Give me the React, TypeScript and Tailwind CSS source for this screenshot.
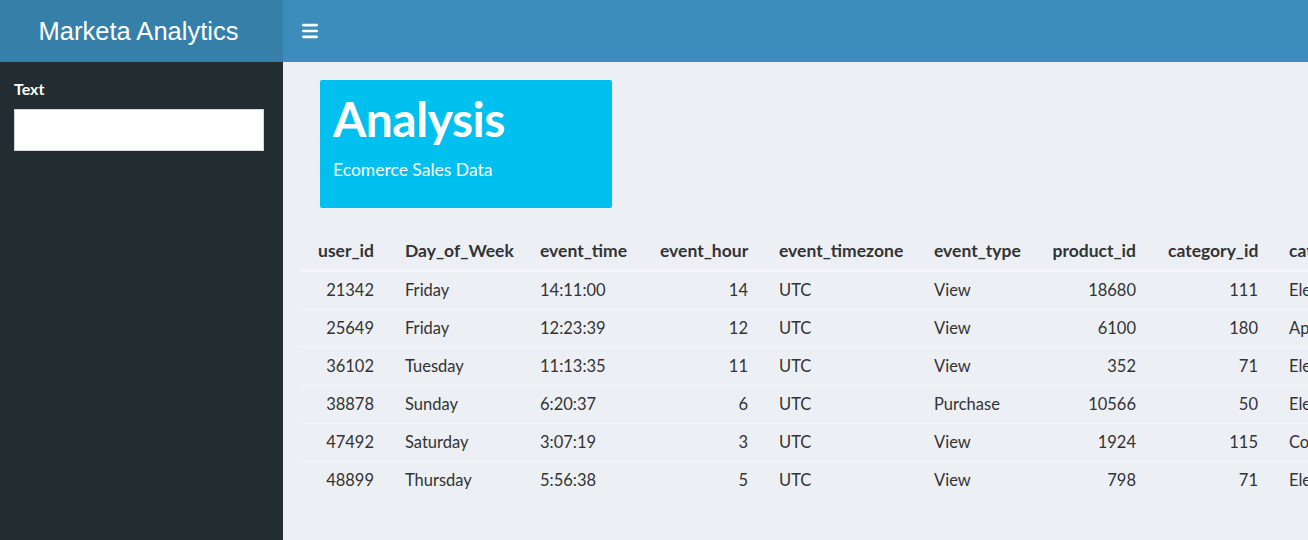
import { Menu } from "lucide-react";

type Row = {
  user_id: number;
  day: string;
  time: string;
  hour: number;
  tz: string;
  type: string;
  product: number;
  category: number;
  catName: string;
};

const rows: Row[] = [
  { user_id: 21342, day: "Friday", time: "14:11:00", hour: 14, tz: "UTC", type: "View", product: 18680, category: 111, catName: "Electronics" },
  { user_id: 25649, day: "Friday", time: "12:23:39", hour: 12, tz: "UTC", type: "View", product: 6100, category: 180, catName: "Apparel" },
  { user_id: 36102, day: "Tuesday", time: "11:13:35", hour: 11, tz: "UTC", type: "View", product: 352, category: 71, catName: "Electronics" },
  { user_id: 38878, day: "Sunday", time: "6:20:37", hour: 6, tz: "UTC", type: "Purchase", product: 10566, category: 50, catName: "Electronics" },
  { user_id: 47492, day: "Saturday", time: "3:07:19", hour: 3, tz: "UTC", type: "View", product: 1924, category: 115, catName: "Computers" },
  { user_id: 48899, day: "Thursday", time: "5:56:38", hour: 5, tz: "UTC", type: "View", product: 798, category: 71, catName: "Electronics" },
];

const font = { fontFamily: "Lato, 'Noto Sans', sans-serif" };

export default function App() {
  return (
    <div className="w-[1308px] h-[540px] flex flex-col overflow-hidden bg-[#ecf0f5]" style={font}>
      {/* Top header */}
      <header className="h-[62px] flex shrink-0">
        <div
          className="w-[283px] bg-[#367fa9] flex items-center justify-center text-white text-[25.5px] pr-[6px]"
          style={{ fontFamily: "'Liberation Sans', Arial, sans-serif" }}
        >
          Marketa Analytics
        </div>
        <div className="flex-1 bg-[#3c8dbc] flex items-center">
          <div className="pl-[17px] text-white">
            <Menu className="size-[20px]" strokeWidth={3.2} />
          </div>
        </div>
      </header>

      <div className="flex flex-1 min-h-0">
        {/* Sidebar */}
        <aside className="w-[283px] bg-[#222d32] px-[14px] pt-[15px] shrink-0">
          <label className="block text-white font-bold text-[16px] mb-[8px]">Text</label>
          <input className="w-[250px] h-[42px] bg-white border border-[#d2d6de] outline-none" />
        </aside>

        {/* Main content */}
        <main className="flex-1 min-w-0 overflow-hidden pt-[18px]">
          <div className="pl-[37px]">
            <div className="w-[292px] h-[128px] bg-[#00c0ef] rounded-[2px] text-white px-[13px] pt-[10px]">
              <h3 className="font-bold text-[48px] leading-[58px] tracking-[-0.5px]">Analysis</h3>
              <p className="text-[17.5px] mt-[9px]">Ecomerce Sales Data</p>
            </div>
          </div>

          <div className="pl-[17px] mt-[22px]">
            <table className="table-fixed border-collapse text-[#333] text-[16.5px] w-[1200px]">
              <colgroup>
                <col className="w-[90px]" />
                <col className="w-[134px]" />
                <col className="w-[120px]" />
                <col className="w-[120px]" />
                <col className="w-[154px]" />
                <col className="w-[118px]" />
                <col className="w-[116px]" />
                <col className="w-[122px]" />
                <col className="w-[226px]" />
              </colgroup>
              <thead>
                <tr className="h-[41px] text-[17.5px] border-b-2 border-[#f5f7fa]">
                  <th className="px-4 pt-[3px] text-right font-bold">user_id</th>
                  <th className="px-[15px] pt-[3px] text-left font-bold">Day_of_Week</th>
                  <th className="px-4 pt-[3px] text-left font-bold">event_time</th>
                  <th className="px-4 pt-[3px] text-right font-bold">event_hour</th>
                  <th className="px-[15px] pt-[3px] text-left font-bold whitespace-nowrap">event_timezone</th>
                  <th className="px-4 pt-[3px] text-left font-bold">event_type</th>
                  <th className="px-4 pt-[3px] text-right font-bold">product_id</th>
                  <th className="px-4 pt-[3px] text-right font-bold whitespace-nowrap">category_id</th>
                  <th className="px-[15px] pt-[3px] text-left font-bold">category_name</th>
                </tr>
              </thead>
              <tbody>
                {rows.map((r) => (
                  <tr key={r.user_id} className="h-[38px] border-b border-[#f5f7fa] last:border-b-0">
                    <td className="px-4 pt-[1px] text-right">{r.user_id}</td>
                    <td className="px-[15px] pt-[1px]">{r.day}</td>
                    <td className="px-4 pt-[1px]">{r.time}</td>
                    <td className="px-4 pt-[1px] text-right">{r.hour}</td>
                    <td className="px-[15px] pt-[1px]">{r.tz}</td>
                    <td className="px-4 pt-[1px]">{r.type}</td>
                    <td className="px-4 pt-[1px] text-right">{r.product}</td>
                    <td className="px-4 pt-[1px] text-right">{r.category}</td>
                    <td className="px-[15px] pt-[1px]">{r.catName}</td>
                  </tr>
                ))}
              </tbody>
            </table>
          </div>
        </main>
      </div>
    </div>
  );
}
